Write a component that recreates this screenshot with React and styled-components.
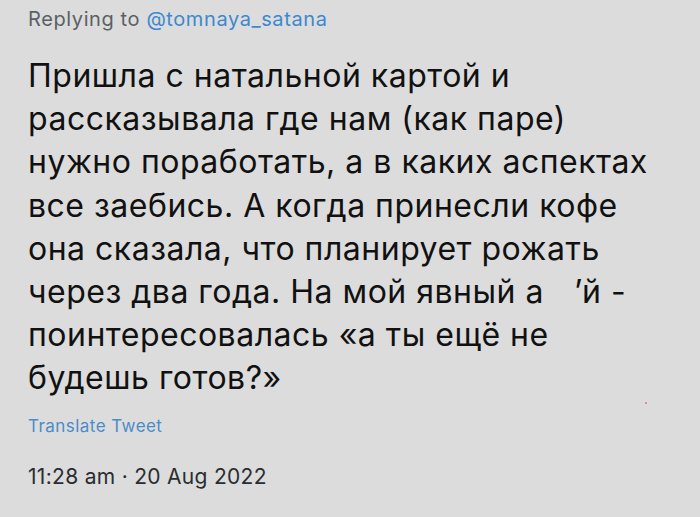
import React from 'react';
import styled, { createGlobalStyle } from 'styled-components';

const GlobalStyle = createGlobalStyle`
  html, body {
    margin: 0;
    padding: 0;
    background: #dcdcdc;
  }
  body {
    font-family: Inter, "Liberation Sans", Arial, sans-serif;
  }
`;

const Page = styled.div`
  width: 700px;
  height: 517px;
  box-sizing: border-box;
  padding: 6px 0 0 28px;
  background: #dcdcdc;
  position: relative;
  overflow: hidden;
`;

const ReplyLine = styled.div`
  font-size: 20px;
  line-height: 26px;
  letter-spacing: 0.6px;
  color: #5b6065;
`;

const Handle = styled.span`
  color: #3d89cf;
`;

const Body = styled.p`
  margin: 22px 0 0;
  font-size: 32px;
  line-height: 43.2px;
  letter-spacing: 0.5px;
  color: #111;
`;

const Gap = styled.span`
  display: inline-block;
  width: 30px;
`;

const Translate = styled.div`
  margin-top: 16px;
  font-size: 17px;
  letter-spacing: 0.45px;
  color: #4a8cc9;
`;

const Stamp = styled.div`
  margin-top: 28px;
  font-size: 21px;
  letter-spacing: 0.3px;
  color: #2a2d30;
`;

const Speck = styled.span`
  position: absolute;
  left: 645px;
  top: 402px;
  width: 2px;
  height: 2px;
  background: #e07a8a;
  border-radius: 1px;
`;

const lines = [
  'Пришла с натальной картой и',
  'рассказывала где нам (как паре)',
  'нужно поработать, а в каких аспектах',
  'все заебись. А когда принесли кофе',
  'она сказала, что планирует рожать',
];

export default function App() {
  return (
    <>
      <GlobalStyle />
      <Page>
        <ReplyLine>
          Replying to <Handle>@tomnaya_satana</Handle>
        </ReplyLine>
        <Body>
          {lines.map((l, i) => (
            <React.Fragment key={i}>
              {l}
              <br />
            </React.Fragment>
          ))}
          через два года. На мой явный а<Gap />ʼй -
          <br />
          поинтересовалась «а ты ещё не
          <br />
          будешь готов?»
        </Body>
        <Translate>Translate Tweet</Translate>
        <Stamp>11:28 am · 20 Aug 2022</Stamp>
        <Speck />
      </Page>
    </>
  );
}
